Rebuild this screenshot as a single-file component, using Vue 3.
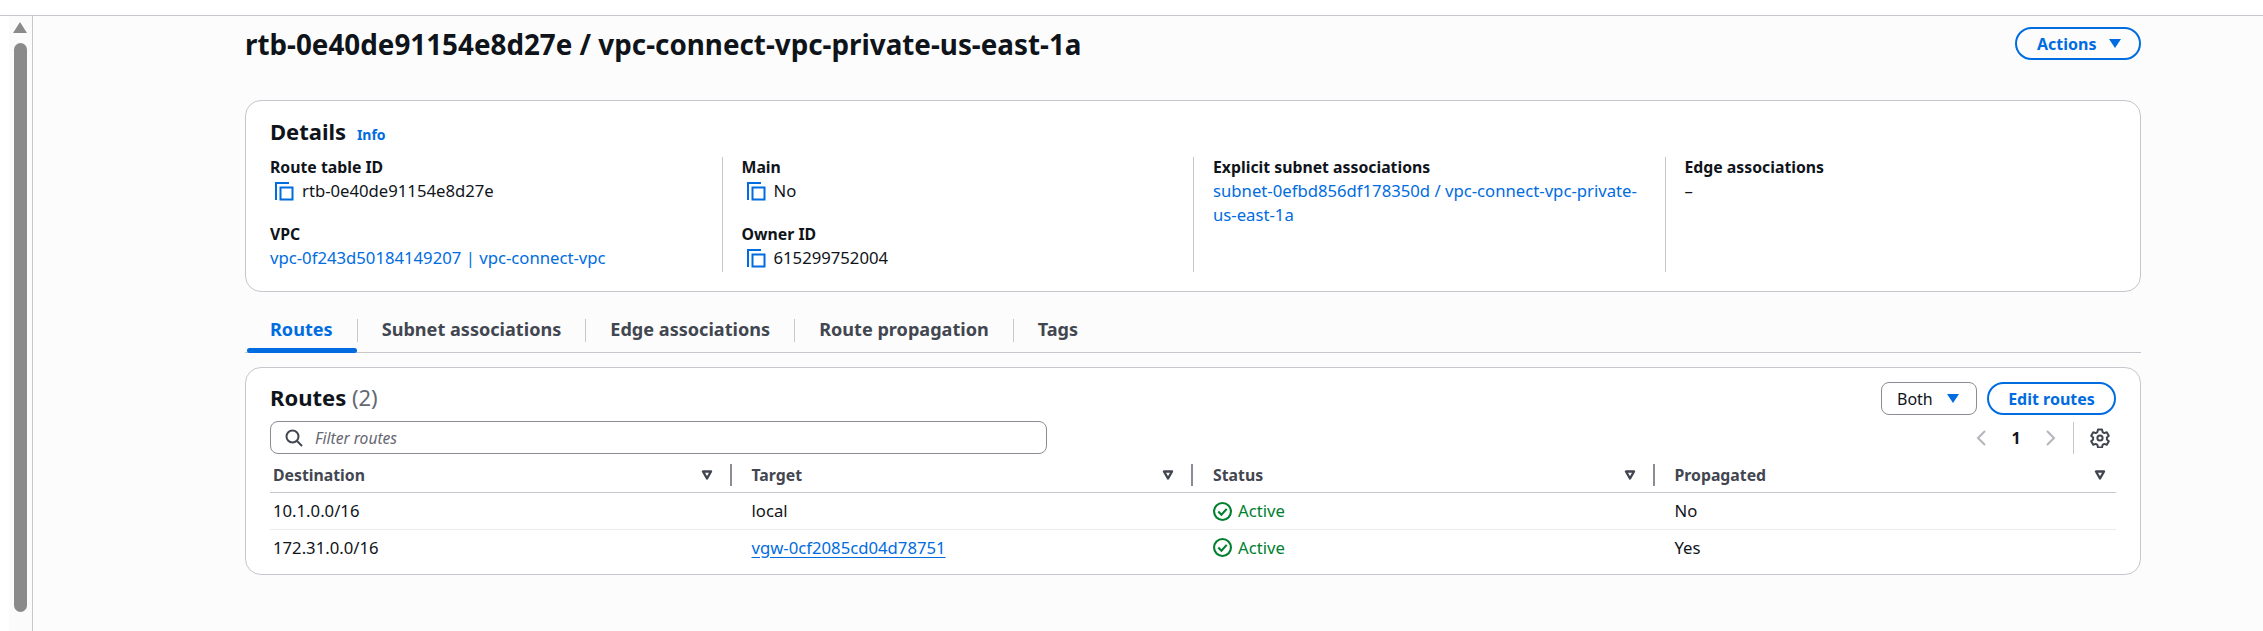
<script setup>
const details = [
  [
    { label: 'Route table ID', value: 'rtb-0e40de91154e8d27e', copy: true },
    { label: 'VPC', value: 'vpc-0f243d50184149207 | vpc-connect-vpc', link: true },
  ],
  [
    { label: 'Main', value: 'No', copy: true },
    { label: 'Owner ID', value: '615299752004', copy: true },
  ],
  [
    { label: 'Explicit subnet associations', value: 'subnet-0efbd856df178350d / vpc-connect-vpc-private-us-east-1a', link: true },
  ],
  [{ label: 'Edge associations', value: '–' }],
]
const tabs = ['Routes', 'Subnet associations', 'Edge associations', 'Route propagation', 'Tags']
const columns = ['Destination', 'Target', 'Status', 'Propagated']
const routes = [
  { destination: '10.1.0.0/16', target: 'local', propagated: 'No' },
  { destination: '172.31.0.0/16', target: 'vgw-0cf2085cd04d78751', link: true, propagated: 'Yes' },
]
</script>

<template>
  <div class="page">
    <div class="topbar"></div>
    <div class="body">
      <div class="rail">
        <div class="scroll-arrow"></div>
        <div class="scroll-thumb"></div>
      </div>
      <main class="main">
        <header class="page-head">
          <h1>rtb-0e40de91154e8d27e / vpc-connect-vpc-private-us-east-1a</h1>
          <button class="btn btn-outline actions">Actions <span class="caret"></span></button>
        </header>

        <section class="card details">
          <h2>Details <a class="info">Info</a></h2>
          <div class="detail-grid">
            <div v-for="(col, i) in details" :key="i" class="detail-col">
              <div v-for="item in col" :key="item.label" class="kv">
                <div class="label">{{ item.label }}</div>
                <div class="value" :class="{ link: item.link }">
                  <svg v-if="item.copy" class="copy" viewBox="0 0 20 20" fill="none" stroke="#006ce0" stroke-width="2">
                    <path d="M2 19V2H15" />
                    <rect x="6.5" y="6.5" width="12" height="12" />
                  </svg>
                  <span>{{ item.value }}</span>
                </div>
              </div>
            </div>
          </div>
        </section>

        <nav class="tabs">
          <div v-for="(tab, i) in tabs" :key="tab" class="tab" :class="{ active: i === 0 }">{{ tab }}</div>
        </nav>

        <section class="card routes">
          <div class="routes-head">
            <h2>Routes <span class="count">(2)</span></h2>
            <div class="routes-actions">
              <button class="btn btn-select">Both <span class="caret"></span></button>
              <button class="btn btn-outline edit">Edit routes</button>
            </div>
          </div>
          <div class="toolbar">
            <div class="filter">
              <svg class="search" viewBox="0 0 18 18" fill="none" stroke="#424650" stroke-width="2">
                <circle cx="7.5" cy="7.5" r="6" />
                <path d="M12 12l5 5" />
              </svg>
              <span>Filter routes</span>
            </div>
            <div class="pager">
              <svg class="chev" viewBox="0 0 12 18" fill="none" stroke="#b4b4bb" stroke-width="2"><path d="M10 2L3 9l7 7" /></svg>
              <span class="page-num">1</span>
              <svg class="chev" viewBox="0 0 12 18" fill="none" stroke="#b4b4bb" stroke-width="2"><path d="M2 2l7 7-7 7" /></svg>
              <div class="gear-wrap">
                <svg class="gear" viewBox="0 0 20 20" fill="none" stroke="#424650" stroke-width="2" stroke-linejoin="round">
                  <path d="M8 1.5h4l.6 2.6 1.7 1 2.5-.8 2 3.4-1.9 1.8v2l1.9 1.8-2 3.4-2.5-.8-1.7 1-.6 2.6H8l-.6-2.6-1.7-1-2.5.8-2-3.4 1.9-1.8v-2L1.200 7.700l2-3.400 2.500.8 1.700-1z" />
                  <circle cx="10" cy="10" r="2.600" />
                </svg>
              </div>
            </div>
          </div>

          <div class="table">
            <div class="row head">
              <div v-for="c in columns" :key="c" class="cell">
                <span>{{ c }}</span>
                <svg class="sort" viewBox="0 0 12 10" fill="none" stroke="#424650" stroke-width="2.4" stroke-linejoin="round"><path d="M2 1.500h8L6 8.500z" /></svg>
              </div>
            </div>
            <div v-for="r in routes" :key="r.destination" class="row">
              <div class="cell">{{ r.destination }}</div>
              <div class="cell"><a v-if="r.link" class="target-link">{{ r.target }}</a><template v-else>{{ r.target }}</template></div>
              <div class="cell status">
                <svg class="check" viewBox="0 0 18 18" fill="none" stroke="#00802f" stroke-width="2">
                  <circle cx="9" cy="9" r="8" />
                  <path d="M5 9l3 3 5-5.500" />
                </svg>
                Active
              </div>
              <div class="cell">{{ r.propagated }}</div>
            </div>
          </div>
        </section>
      </main>
    </div>
  </div>
</template>

<style>
html, body { margin: 0; background: #fff; }
</style>

<style scoped>
.page {
  width: 2263px;
  height: 631px;
  overflow: hidden;
  font-family: "Noto Sans", "Open Sans", sans-serif;
  font-size: 16.7px;
  color: #0f141a;
  background: #fff;
}
.topbar { height: 15px; border-bottom: 1px solid #c6c6cd; box-sizing: content-box; }
.body { display: flex; height: 615px; }
.rail {
  margin-left: 9px;
  background: #fbfbfb;
  border-right: 1px solid #c6c6cd;
  display: flex;
  flex-direction: column;
  align-items: flex-start;
  padding-left: 5px;
  box-sizing: border-box;
  flex: 0 0 24px;
}
.scroll-arrow {
  width: 0; height: 0;
  margin: 6px 0 10px -1px;
  border-left: 7.500px solid transparent;
  border-right: 7.500px solid transparent;
  border-bottom: 11px solid #8a8a8a;
}
.scroll-thumb { width: 13px; height: 569px; background: #8a8a8a; border-radius: 7px; }
.main {
  flex: 1;
  background: #fcfcfc;
  padding: 0 122px 0 212px;
  box-sizing: border-box;
  min-width: 0;
}
.page-head {
  display: flex;
  justify-content: space-between;
  align-items: flex-start;
  height: 84px;
  padding-top: 11px;
  box-sizing: border-box;
}
h1 { margin: 0; font-size: 27.8px; line-height: 34px; font-weight: 700; }
h2 { margin: 0; font-size: 22px; line-height: 28px; font-weight: 700; }
.btn {
  font-family: inherit;
  font-size: 16px;
  font-weight: 700;
  height: 33px;
  border-radius: 20px;
  background: transparent;
  padding: 0 20px;
  display: inline-flex;
  align-items: center;
  box-sizing: border-box;
  cursor: pointer;
}
.btn-outline { border: 2px solid #006ce0; color: #006ce0; }
.actions { width: 126px; gap: 12px; }
.edit { width: 129px; justify-content: center; padding: 0; }
.caret {
  width: 0; height: 0;
  border-left: 6px solid transparent;
  border-right: 6px solid transparent;
  border-top: 9px solid #006ce0;
  display: inline-block;
}
.card {
  background: #fff;
  border: 1px solid #c6c6cd;
  border-radius: 16px;
  box-sizing: border-box;
}
.details { height: 192px; padding: 16px 24px 0; }
.info { font-size: 14px; font-weight: 700; color: #006ce0; margin-left: 5px; }
.detail-grid {
  display: grid;
  grid-template-columns: repeat(4, 431px);
  column-gap: 40.5px;
  margin-top: 8px;
}
.detail-col { position: relative; height: 115px; }
.detail-col + .detail-col::before {
  content: "";
  position: absolute;
  left: -20px; top: 0; bottom: 0;
  width: 1px;
  background: #c6c6cd;
}
.kv { height: 67px; box-sizing: border-box; }
.label { font-size: 15.8px; font-weight: 700; line-height: 20px; }
.value { display: flex; align-items: flex-start; line-height: 24px; margin-top: 2px; }
.value.link { color: #006ce0; }
.copy { width: 20px; height: 20px; margin: 2px 8px 0 4px; flex: none; }
.tabs {
  display: flex;
  height: 50px;
  margin-top: 10px;
  border-bottom: 1px solid #c6c6cd;
  box-sizing: content-box;
  align-items: flex-start;
  position: relative;
}
.tab {
  font-size: 18.1px;
  font-weight: 700;
  line-height: 24px;
  color: #424650;
  padding: 15px 24px 0 25px;
  height: 50px;
  box-sizing: border-box;
  position: relative;
}
.tab + .tab::before {
  content: "";
  position: absolute;
  left: 0; top: 17px;
  height: 23px;
  width: 1px;
  background: #c6c6cd;
}
.tab.active { color: #006ce0; }
.tab.active::after {
  content: "";
  position: absolute;
  left: 2px; right: 0; bottom: -1px;
  height: 5px;
  border-radius: 3px;
  background: #006ce0;
}
.routes { margin-top: 14px; height: 208px; padding: 14px 24px 0; }
.routes-head { display: flex; justify-content: space-between; align-items: flex-start; height: 39px; }
.routes-head h2 { margin-top: 1px; }
.count { font-weight: 400; color: #656871; }
.routes-actions { display: flex; gap: 10px; }
.btn-select {
  border: 1px solid #8c8c94;
  border-radius: 8px;
  color: #0f141a;
  font-weight: 400;
  width: 96px;
  gap: 14px;
  padding: 0 15px;
}
.toolbar { display: flex; justify-content: space-between; align-items: flex-start; }
.filter {
  width: 777px;
  height: 33px;
  border: 1px solid #8c8c94;
  border-radius: 8px;
  display: flex;
  align-items: center;
  box-sizing: border-box;
  color: #656871;
  font-size: 15.6px;
  font-style: italic;
  padding-left: 14px;
  gap: 12px;
}
.search { width: 18px; height: 18px; }
.pager { display: flex; align-items: center; height: 33px; }
.chev { width: 12px; height: 18px; }
.page-num { font-size: 16px; font-weight: 700; width: 58px; text-align: center; }
.gear-wrap { border-left: 1px solid #c6c6cd; margin-left: 16px; padding-left: 16px; margin-right: 6px; height: 32px; display: flex; align-items: center; }
.gear { width: 20px; height: 20px; }
.table { margin-top: 3px; }
.row {
  display: grid;
  grid-template-columns: repeat(4, 1fr);
  height: 37px;
  align-items: center;
  border-bottom: 1px solid #ebebf0;
  box-sizing: border-box;
}
.row:last-child { border-bottom: 0; height: 35px; }
.row.head { height: 36px; border-bottom: 1px solid #c6c6cd; font-size: 15.8px; font-weight: 700; color: #424650; }
.cell { padding-left: 20px; display: flex; align-items: center; position: relative; line-height: 20px; }
.cell:first-child { padding-left: 3px; }
.head .cell { justify-content: space-between; padding-right: 19px; height: 22px; }
.head .cell:last-child { padding-right: 10px; }
.head .cell:not(:last-child)::after {
  content: "";
  position: absolute;
  right: 0; top: 0; bottom: 0;
  width: 2px;
  background: #8c8c94;
}
.sort { width: 12px; height: 10px; }
.status { color: #00802f; gap: 6px; }
.check { width: 19px; height: 19px; flex: none; }
.target-link { color: #006ce0; text-decoration: underline; text-underline-offset: 3px; }
</style>
